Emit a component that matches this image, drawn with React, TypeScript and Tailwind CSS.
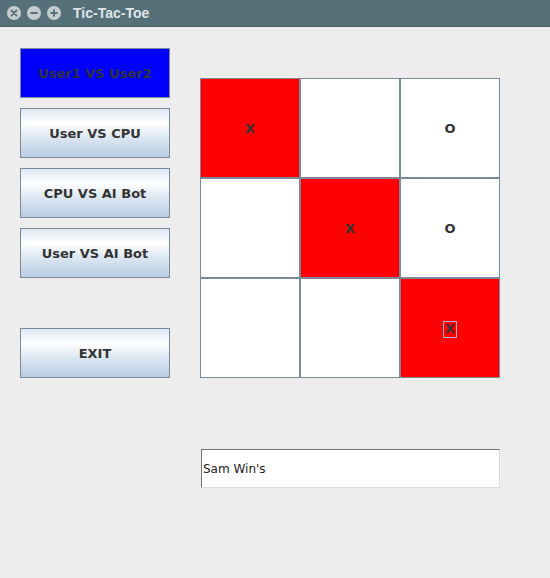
const board: { mark: string; win: boolean }[] = [
  { mark: "X", win: true },
  { mark: "", win: false },
  { mark: "O", win: false },
  { mark: "", win: false },
  { mark: "X", win: true },
  { mark: "O", win: false },
  { mark: "", win: false },
  { mark: "", win: false },
  { mark: "X", win: true },
];

const WinButton = ({ glyph }: { glyph: "x" | "-" | "+" }) => (
  <svg width="14" height="14" viewBox="0 0 14 14">
    <circle cx="7" cy="7" r="7" fill="#c6cbce" />
    {glyph === "x" && (
      <path d="M4.5 4.5 L9.5 9.5 M9.5 4.5 L4.5 9.5" stroke="#56707a" strokeWidth="1.8" strokeLinecap="round" />
    )}
    {glyph === "-" && <path d="M4 7 H10" stroke="#56707a" strokeWidth="1.8" strokeLinecap="round" />}
    {glyph === "+" && (
      <path d="M4 7 H10 M7 4 V10" stroke="#56707a" strokeWidth="1.8" strokeLinecap="round" />
    )}
  </svg>
);

const MenuButton = ({ label, active = false }: { label: string; active?: boolean }) => (
  <button
    className={
      active
        ? "w-[150px] h-[50px] pt-[2px] border border-[#7a8a99] bg-[#0000ff] text-[#333333] text-[13px] font-bold"
        : "w-[150px] h-[50px] pt-[2px] border border-[#7a8a99] bg-[linear-gradient(to_bottom,#dde8f3_0%,#ffffff_30%,#dbe6f1_60%,#b8cee4_100%)] text-[#333333] text-[13px] font-bold"
    }
    style={{ fontFamily: '"DejaVu Sans", sans-serif' }}
  >
    {label}
  </button>
);

export default function App() {
  return (
    <div className="w-[550px] h-[578px] bg-[#ededed] flex flex-col" style={{ fontFamily: '"DejaVu Sans", sans-serif' }}>
      <div className="h-[27px] bg-[#56707a] flex items-center pl-[7px] border-b border-[#4c626b]">
        <div className="flex gap-[6px]">
          <WinButton glyph="x" />
          <WinButton glyph="-" />
          <WinButton glyph="+" />
        </div>
        <span
          className="ml-[12px] text-[14px] font-bold text-[#dfe5e8]"
          style={{ fontFamily: '"Liberation Sans", sans-serif' }}
        >
          Tic-Tac-Toe
        </span>
      </div>

      <div className="flex pl-[20px] pt-[21px]">
        <div className="flex flex-col gap-[10px] w-[150px]">
          <MenuButton label="User1 VS User2" active />
          <MenuButton label="User VS CPU" />
          <MenuButton label="CPU VS AI Bot" />
          <MenuButton label="User VS AI Bot" />
          <div className="mt-[40px]">
            <MenuButton label="EXIT" />
          </div>
        </div>

        <div className="ml-[30px] mt-[30px] flex flex-col">
          <div className="grid grid-cols-3 w-[300px] h-[300px]">
            {board.map((c, i) => (
              <div
                key={i}
                className={
                  c.win
                    ? "w-[100px] h-[100px] pt-[2px] border border-[#7a8a99] bg-[#ff0000] flex items-center justify-center"
                    : "w-[100px] h-[100px] pt-[2px] border border-[#7a8a99] bg-white flex items-center justify-center"
                }
              >
                {i === 8 ? (
                  <span className="border border-[#a9b9c9] px-[1px] h-[17px] flex items-center text-[13px] font-bold text-[#333333]">
                    {c.mark}
                  </span>
                ) : (
                  <span className="text-[13px] font-bold text-[#333333]">{c.mark}</span>
                )}
              </div>
            ))}
          </div>

          <div className="mt-[71px] ml-[1px] w-[299px] h-[39px] bg-white border-t border-l border-[#737373] border-r border-b border-r-[#dadada] border-b-[#dadada] flex items-center pl-[1px] text-[12px] text-[#1a1a1a]">
            Sam Win's
          </div>
        </div>
      </div>
    </div>
  );
}
